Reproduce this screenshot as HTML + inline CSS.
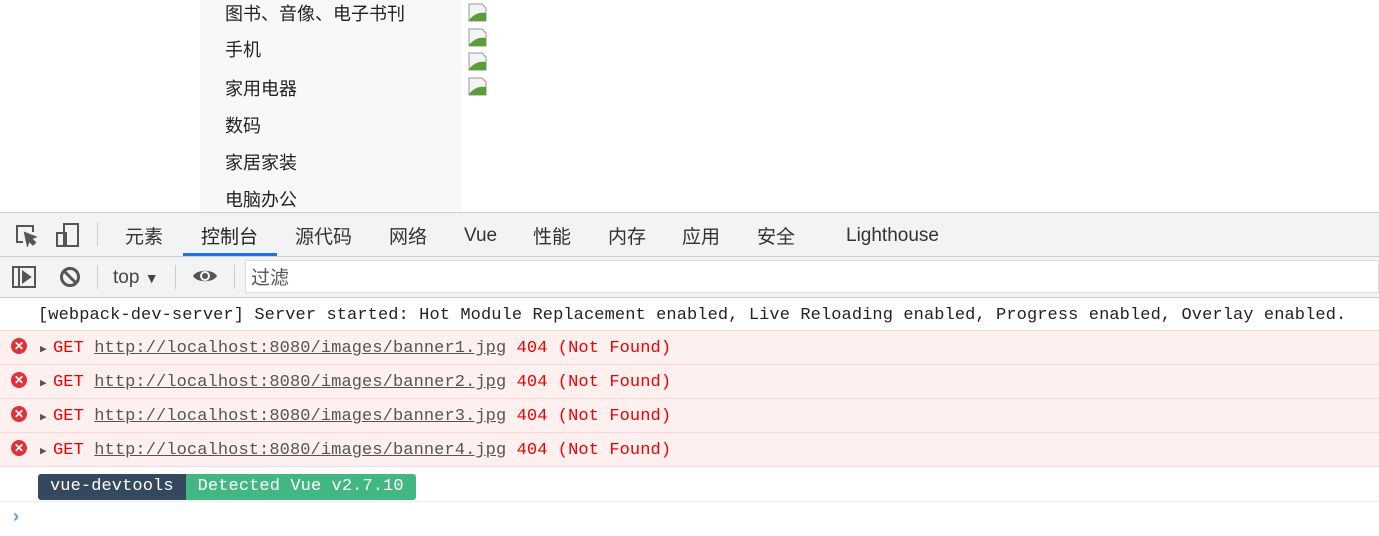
<!DOCTYPE html>
<html><head><meta charset="utf-8"><style>
*{margin:0;padding:0;box-sizing:border-box}
body{width:1379px;height:536px;overflow:hidden;background:#fff;font-family:"Liberation Sans","Microsoft YaHei","Noto Sans CJK SC",sans-serif;position:relative}
.side{position:absolute;left:200px;top:0;width:262px;height:212px;background:#f8f8f8}
.it{position:absolute;left:225px;font-size:18px;color:#222;line-height:20px}
.img{position:absolute;left:468px;width:20px;height:19px}
.tabs{position:absolute;top:212px;left:0;width:1379px;height:45px;background:#f1f3f4;border-top:1px solid #cbcdd1;border-bottom:1px solid #cbcdd1}
.tab{position:absolute;top:9px;font-size:19px;color:#333}
.lt{top:12px}
.tb{position:absolute;top:257px;left:0;width:1379px;height:41px;background:#f1f3f4;border-bottom:1px solid #cbcdd1}
.mono{font-family:"Liberation Mono",monospace;font-size:17px;letter-spacing:0.1px}
.row{position:absolute;left:0;width:1379px;height:34px;background:#fff0f0;border-top:1px solid #fcd7d7}
.row .t{position:absolute;left:40px;top:8px;color:#e00}
.row .tri{display:inline-block;width:13px;color:#555;font-size:11px;letter-spacing:0}
.row a{color:#555;text-decoration:underline}
.x{position:absolute;left:11px;top:7px;width:16px;height:16px;border-radius:50%;background:#e0303a;color:#fff;font-size:12px;line-height:16px;text-align:center;font-weight:bold}
</style></head><body>
<div class="side"></div>
<div class="it" style="top:4px">图书、音像、电子书刊</div>
<div class="it" style="top:40px">手机</div>
<div class="it" style="top:79px">家用电器</div>
<div class="it" style="top:116px">数码</div>
<div class="it" style="top:153px">家居家装</div>
<div class="it" style="top:190px">电脑办公</div>
<svg class="img" style="top:3px" viewBox="0 0 20 19"><path d="M1 1h13l4 4v13H1z" fill="#f4f4f4" stroke="#999"/><path d="M1 17c5-6 10-8 17-7v8H1z" fill="#5a9e3a"/></svg>
<svg class="img" style="top:28px" viewBox="0 0 20 19"><path d="M1 1h13l4 4v13H1z" fill="#f4f4f4" stroke="#999"/><path d="M1 17c5-6 10-8 17-7v8H1z" fill="#5a9e3a"/></svg>
<svg class="img" style="top:52px" viewBox="0 0 20 19"><path d="M1 1h13l4 4v13H1z" fill="#f4f4f4" stroke="#999"/><path d="M1 17c5-6 10-8 17-7v8H1z" fill="#5a9e3a"/></svg>
<svg class="img" style="top:77px" viewBox="0 0 20 19"><path d="M1 1h13l4 4v13H1z" fill="#f4f4f4" stroke="#999"/><path d="M1 17c5-6 10-8 17-7v8H1z" fill="#5a9e3a"/></svg>

<div class="tabs">
<svg style="position:absolute;left:14px;top:10px" width="24" height="24" viewBox="0 0 24 24" fill="none" stroke="#555" stroke-width="2"><path d="M9 19H3V3h16v6"/><path d="M11 10l10 4-4 1.5 4 4-2 2-4-4-1.5 4z" fill="#555"/></svg>
<svg style="position:absolute;left:55px;top:9px" width="26" height="26" viewBox="0 0 26 26" fill="none" stroke="#555" stroke-width="2"><rect x="9" y="2" width="14" height="22"/><rect x="2" y="11" width="9" height="13"/></svg>
<div style="position:absolute;left:97px;top:9px;width:1px;height:24px;background:#ccc"></div>
<div class="tab" style="left:125px">元素</div>
<div class="tab" style="left:201px;color:#222">控制台</div>
<div style="position:absolute;left:183px;top:40px;width:94px;height:3px;background:#1a73e8"></div>
<div class="tab" style="left:295px">源代码</div>
<div class="tab" style="left:389px">网络</div>
<div class="tab lt" style="left:464px">Vue</div>
<div class="tab" style="left:533px">性能</div>
<div class="tab" style="left:608px">内存</div>
<div class="tab" style="left:682px">应用</div>
<div class="tab" style="left:757px">安全</div>
<div class="tab lt" style="left:846px">Lighthouse</div>
</div>

<div class="tb">
<svg style="position:absolute;left:12px;top:9px" width="24" height="22" viewBox="0 0 24 22" fill="none" stroke="#555" stroke-width="2"><rect x="1" y="1" width="22" height="20"/><path d="M7 1v20"/><path d="M11 6l7 5-7 5z" fill="#555"/></svg>
<svg style="position:absolute;left:59px;top:9px" width="22" height="22" viewBox="0 0 22 22" fill="none" stroke="#555" stroke-width="3"><circle cx="11" cy="11" r="8.5"/><path d="M5 5l12 12"/></svg>
<div style="position:absolute;left:97px;top:8px;width:1px;height:24px;background:#ccc"></div>
<div style="position:absolute;left:113px;top:10px;font-size:19px;color:#444">top <span style="font-size:14px">▼</span></div>
<div style="position:absolute;left:175px;top:8px;width:1px;height:24px;background:#ccc"></div>
<svg style="position:absolute;left:192px;top:10px" width="26" height="18" viewBox="0 0 26 18"><path d="M1 9C5 2 21 2 25 9C21 16 5 16 1 9z" fill="#555"/><circle cx="13" cy="9" r="5" fill="#f1f3f4"/><circle cx="13" cy="9" r="3" fill="#555"/></svg>
<div style="position:absolute;left:234px;top:8px;width:1px;height:24px;background:#ccc"></div>
<div style="position:absolute;left:245px;top:3px;width:1134px;height:33px;background:#fff;border:1px solid #ddd"></div>
<div style="position:absolute;left:251px;top:6px;font-size:19px;color:#555">过滤</div>
</div>

<div class="mono" style="position:absolute;left:38px;top:306px;color:#222;white-space:nowrap">[webpack-dev-server] Server started: Hot Module Replacement enabled, Live Reloading enabled, Progress enabled, Overlay enabled.</div>

<div class="row" style="top:330px"><div class="x">✕</div><div class="t mono"><span class="tri">▶</span>GET <a>http://localhost:8080/images/banner1.jpg</a> 404 (Not Found)</div></div>
<div class="row" style="top:364px"><div class="x">✕</div><div class="t mono"><span class="tri">▶</span>GET <a>http://localhost:8080/images/banner2.jpg</a> 404 (Not Found)</div></div>
<div class="row" style="top:398px"><div class="x">✕</div><div class="t mono"><span class="tri">▶</span>GET <a>http://localhost:8080/images/banner3.jpg</a> 404 (Not Found)</div></div>
<div class="row" style="top:432px;border-bottom:1px solid #fcd7d7;height:35px"><div class="x">✕</div><div class="t mono"><span class="tri">▶</span>GET <a>http://localhost:8080/images/banner4.jpg</a> 404 (Not Found)</div></div>

<div class="mono" style="position:absolute;left:38px;top:474px;height:26px;line-height:26px;white-space:nowrap;display:flex">
<span style="background:#35495e;color:#fff;padding:0 12px;border-radius:3px 0 0 3px">vue-devtools</span><span style="background:#41b883;color:#fff;padding:0 12px;border-radius:0 3px 3px 0">Detected Vue v2.7.10</span></div>
<div style="position:absolute;left:0;top:501px;width:1379px;height:1px;background:#eee"></div>
<div style="position:absolute;left:13px;top:506px;color:#5b9cf5;font-size:18px;font-weight:bold">›</div>
</body></html>
